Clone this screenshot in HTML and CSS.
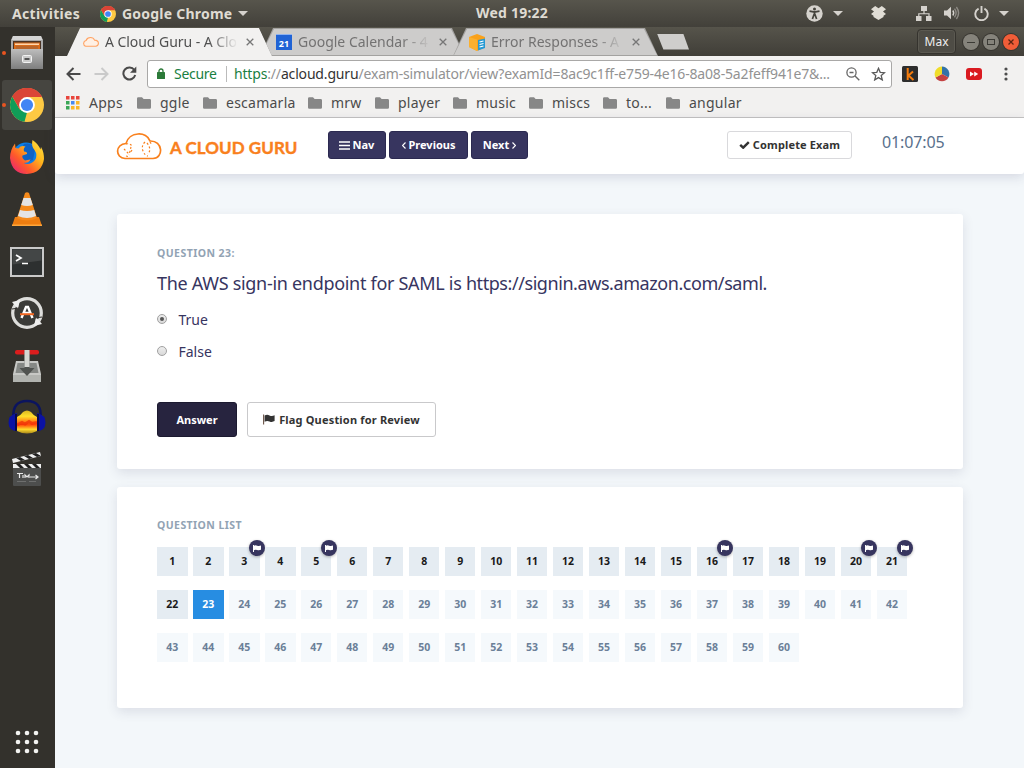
FILE: index.html
```html
<!DOCTYPE html>
<html lang="en">
<head>
<meta charset="utf-8">
<title>A Cloud Guru</title>
<link rel="stylesheet" href="styles.css">
</head>
<body>
<svg width="0" height="0" class="defs">
  <symbol id="chrome" viewBox="0 0 34 34">
    <circle cx="17" cy="17" r="17" fill="#fdc943"/>
    <path d="M17 17L2.3 8.5A17 17 0 0 1 31.7 8.5H17z" fill="#da4437"/>
    <path d="M2.3 8.5L9.6 21.2L17 24.5L14.5 33.8A17 17 0 0 1 2.3 8.5z" fill="#109d58"/>
    <path d="M17 9h15A17 17 0 0 0 2.3 8.5L9.6 21z" fill="#da4437"/>
    <circle cx="17" cy="17" r="7.9" fill="#fff"/><circle cx="17" cy="17" r="6.1" fill="#4285f4"/>
  </symbol>
  <symbol id="folder" viewBox="0 0 14 12"><path d="M0 1.5Q0 .2 1.3 .2H5L6.6 2H12.6Q14 2 14 3.3V10.4Q14 11.7 12.7 11.7H1.3Q0 11.7 0 10.4z" fill="#878787"/></symbol>
  <symbol id="x" viewBox="0 0 8 8"><path d="M.7 .7l6.6 6.6M7.3 .7L.7 7.3" stroke="#777" stroke-width="1.3"/></symbol>
  <symbol id="flag" viewBox="0 0 12 11"><path d="M.6 .5v10" stroke="#6a5348" stroke-width="1.1"/><path d="M1.6 1.6Q4 .2 6.5 1.4T11.6 1.2V7.1Q9 8.6 6.5 7.4T1.6 7.8z" fill="currentColor"/></symbol>
  <symbol id="flagb" viewBox="0 0 8 7"><path d="M0 0h1v7H0z" fill="#fff"/><path d="M.8 .8Q2.5 0 4.2 .7T8 .6V4.8Q6 5.6 4.2 5T.8 5.2z" fill="#fff"/></symbol>
</svg>

<header class="topbar">
  <span class="activities">Activities</span>
  <span class="appmenu"><svg width="16" height="16"><use href="#chrome"/></svg><span class="appname">Google Chrome</span><i class="caret"></i></span>
  <span class="clock">Wed 19:22</span>
  <span class="tray">
    <svg width="17" height="17" viewBox="0 0 17 17"><circle cx="8.5" cy="8.5" r="8.2" fill="#d5d2cd"/><circle cx="8.5" cy="3.9" r="1.5" fill="#45433c"/><path d="M3.5 6.2l4 .7h2l4-.7M8.5 6.8v3M8.2 9l-1.8 5M8.8 9l1.8 5" stroke="#45433c" stroke-width="1.7" fill="none"/></svg>
    <i class="caret c1"></i>
    <svg class="dropbox" width="15" height="14" viewBox="0 0 15 14"><path d="M4.2 0L7.5 2.3 10.8 0 15 3.2 12 5.5 15 8 12.5 9.8V11L7.5 14 2.5 11V9.8L0 8 3 5.5 0 3.2z" fill="#e0ddd5"/></svg>
    <svg class="net" width="16" height="15" viewBox="0 0 16 15"><path d="M5 0h6v5H5zM0 10h5.5v5H0zM10 10h5.5v5H10zM7.4 5h1.2v2.2h5V10h-1.2V8.2h-9V10H2.2V7.2h5.2z" fill="#d5d2cd"/></svg>
    <svg class="vol" width="16" height="14" viewBox="0 0 16 14"><path d="M0 4.5h3L7 .8v12.4L3 9.5H0z" fill="#d5d2cd"/><path d="M8.8 4.5q1.8 2.5 0 5" stroke="#d5d2cd" stroke-width="1.4" fill="none"/><path d="M10.5 2.7q3.2 4.3 0 8.6M12.4 1q4.4 6 0 12" stroke="#8d8a84" stroke-width="1.4" fill="none"/></svg>
    <svg class="power" width="15" height="15" viewBox="0 0 15 15"><path d="M4.6 2.6A6.2 6.2 0 1 0 10.4 2.6" stroke="#d5d2cd" stroke-width="1.9" fill="none"/><path d="M7.5 0v7" stroke="#d5d2cd" stroke-width="1.9"/></svg>
    <i class="caret c2"></i>
  </span>
</header>

<div class="desktop">
  <nav class="dock">
    <a class="slot run"><svg width="34" height="36" viewBox="0 0 34 36"><defs><linearGradient id="gm" x2="0" y2="1"><stop offset="0" stop-color="#bdbdbd"/><stop offset="1" stop-color="#7e7e7e"/></linearGradient></defs><path d="M3 1h28l2 4v29H1V5z" fill="#aaa"/><path d="M3 1h28l1.5 4h-31z" fill="#d5d5d5"/><path d="M3 6h28v9H3z" fill="#4c3424"/><path d="M4 7.5h26v7H4z" fill="#d96b19"/><path d="M5 8.5h24v1.5H5z" fill="#ffd5ac"/><path d="M6 11h22v4H6z" fill="#b9652a"/><path d="M1 14h32v20H1z" fill="url(#gm)"/><rect x="12.5" y="20.500" width="9" height="7" rx="1" fill="#ccc" stroke="#f3f3f3"/><rect x="14.5" y="23" width="5" height="2" fill="#555"/></svg></a>
    <a class="slot run active"><svg width="34" height="34"><use href="#chrome"/></svg></a>
    <a class="slot"><svg width="34" height="36" viewBox="0 0 34 36"><defs><linearGradient id="ff" x1="1" x2="0" y2="1"><stop offset="0" stop-color="#ffe74a"/><stop offset=".35" stop-color="#ffb81c"/><stop offset=".65" stop-color="#ff5a2a"/><stop offset="1" stop-color="#e31587"/></linearGradient></defs><circle cx="16" cy="17" r="13.500" fill="#0b80e8"/><path d="M14 5q9-2 11 6l-2 10-9 3-6-8z" fill="#123f9c" opacity=".45"/><path d="M22.500 1Q21 7 24.500 11Q28 16 25 21Q20 27 13.500 24Q19 24 20.500 20.500L15 21.500Q11.500 19 12.500 16.500L17 15Q17.500 12.500 14 12.500Q13 9.500 15.500 7.500Q11 6 8.500 9.500L5.500 9L5 4.500Q0 11 0 19Q2 35 17 35Q32 34 34 20Q34 13 31 8L30.500 10.500Q28 4.500 22.500 1z" fill="url(#ff)"/></svg></a>
    <a class="slot"><svg width="32" height="36" viewBox="0 0 32 36"><path d="M4 26h24l3 9H1z" fill="#ee7d10"/><path d="M1 33.500h30v1.500H1z" fill="#ffa63a"/><path d="M14 2q2-1.500 4 0l8 25q-10 5-20 0z" fill="#f58a1b"/><path d="M12.500 7h7l2.300 7q-5.800 2-11.600 0zM9 19q7 2 14.200 0l1.800 6q-9 4-18 0z" fill="#e4e4e4"/></svg></a>
    <a class="slot term"><svg width="34" height="30" viewBox="0 0 34 30"><rect x="1" y="1" width="32" height="28" fill="#2d3030" stroke="#c9c9c9" stroke-width="2"/><path d="M2.500 2.500h29v11l-29 4z" fill="#434646"/><path d="M6 8l5 3-5 3" fill="none" stroke="#fff" stroke-width="1.700"/><path d="M12 16.500h6" stroke="#fff" stroke-width="1.500"/></svg></a>
    <a class="slot"><svg width="34" height="34" viewBox="0 0 34 34"><circle cx="17" cy="17" r="14.300" fill="#3b3b38" stroke="#dededc" stroke-width="3.200"/><path d="M2 6l8-2-2 9zM32 28l-8 2 2-9z" fill="#eee"/><path d="M2 13l7-1M25 22l7-1" stroke="#33312d" stroke-width="1.200"/><path d="M11.500 22l4.500-11h2l4.500 11M13 17h8" stroke="#fff" stroke-width="2.400" fill="none"/><path d="M10 18.200h14" stroke="#f16722" stroke-width="2"/></svg></a>
    <a class="slot pump"><svg width="32" height="34" viewBox="0 0 32 34"><path d="M5 12h22l3 13v8H2v-8z" fill="#c7c8c5"/><path d="M6.500 14h19l2 10h-23z" fill="#858885"/><path d="M2 26h28v7H2z" fill="#b1b3af"/><rect x="4" y="1" width="24" height="4.500" rx="2" fill="#db1d1d"/><path d="M13.500 2h5v17h5L16 27l-7.500-8h5z" fill="#505350"/><path d="M13.500 1h5v17h-5z" fill="#d5d6d2"/></svg></a>
    <a class="slot"><svg width="38" height="36" viewBox="0 0 38 36"><defs><linearGradient id="au" x2="0" y2="1"><stop offset="0" stop-color="#d9b422"/><stop offset=".25" stop-color="#ffdf2c"/><stop offset=".5" stop-color="#ff7a10"/><stop offset=".62" stop-color="#ff4a0a"/><stop offset=".82" stop-color="#ffdb2c"/><stop offset="1" stop-color="#a8861d"/></linearGradient></defs><path d="M9 18Q13 16 15 13Q19 10 23 13Q25 16 29 18V32Q19 37 9 32z" fill="url(#au)"/><path d="M9 26l5-2.500 3 1.500 4-2.500 3 2 5-1" stroke="#ee2c08" stroke-width="3" fill="none" opacity=".7"/><path d="M5.500 19Q4 2 19 2T32.500 19" fill="none" stroke="#0b145f" stroke-width="2.600"/><path d="M9 14v18Q1 32 .5 24T9 14zM29 14v18Q37 32 37.500 24T29 14z" fill="#0b12a3"/><path d="M8 15v17M30 15v17" stroke="#07094e" stroke-width="2"/></svg></a>
    <a class="slot"><svg width="32" height="36" viewBox="0 0 32 36"><rect x="2" y="13" width="28" height="22" rx="1" fill="#4d4e4d"/><path d="M2 13h28v4H2zM1 8l28-7 1 4L2 12z" fill="#eee"/><path d="M5 13l4 4h4l-4-4zM13 13l4 4h4l-4-4zM21 13l4 4h4l-4-4zM5 7l5 3 4-1-5-3zM13 5l5 3 4-1-5-3zM21 3l5 3 4-1-5-3z" fill="#202020"/><path d="M6 22.500h6M8.500 23v4M12 24v3M14 27v-3l2 2 2-2v3M19 26h3M22 26h4M24.500 24l2.500 2-2.500 2" stroke="#e8e8e8" stroke-width="1.200" fill="none"/><path d="M6 30.500h9M18 30.500h7" stroke="#777" stroke-width=".8"/></svg></a>
    <svg class="apps9" width="24" height="24" viewBox="0 0 24 24" fill="#f3f3f1"><circle cx="3" cy="3" r="2.300"/><circle cx="12" cy="3" r="2.300"/><circle cx="21" cy="3" r="2.300"/><circle cx="3" cy="12" r="2.300"/><circle cx="12" cy="12" r="2.300"/><circle cx="21" cy="12" r="2.300"/><circle cx="3" cy="21" r="2.300"/><circle cx="12" cy="21" r="2.300"/><circle cx="21" cy="21" r="2.300"/></svg>
  </nav>

  <section class="browser">
    <div class="tabstrip">
      <div class="tab current"><div class="face"><svg class="fav" width="17" height="10" viewBox="0 0 46 26"><path d="M10 24.500a8 8 0 0 1 1-15.500q3-8 12-8 8 0 11 7 10 0 10.500 8.500Q44 24 37 24.500z" fill="#fff0e4" stroke="#ffa363" stroke-width="3"/></svg><span class="title t1">A Cloud Guru - A Clo</span><svg class="close" width="8" height="8"><use href="#x"/></svg></div></div>
      <div class="tab"><div class="face"><span class="cal">21</span><span class="title t2">Google Calendar - 4</span><svg class="close" width="8" height="8"><use href="#x"/></svg></div></div>
      <div class="tab last"><div class="face"><svg class="fav aws" width="17" height="17" viewBox="0 0 17 17"><path d="M0 3l8-3 8 3v10l-8 4-8-4z" fill="#f9a11b"/><path d="M0 3l8 2.500V17l-8-4z" fill="#fbb02f"/><path d="M9 6l7-1.500v9.500L9 16.500z" fill="#2599d3"/><path d="M10.500 8l4-1M10.500 10.500l4-1M10.500 13l4-1" stroke="#fff" stroke-width="1.200"/></svg><span class="title t3">Error Responses - A</span><svg class="close" width="8" height="8"><use href="#x"/></svg></div></div>
      <span class="newtab"></span>
      <span class="user">Max</span>
      <span class="win"><svg width="16" height="16" viewBox="0 0 16 16"><path d="M4 8.500h8" stroke="#3b3a35"/></svg></span>
      <span class="win"><svg width="16" height="16" viewBox="0 0 16 16"><rect x="4.500" y="5.500" width="7" height="5" fill="none" stroke="#3b3a35"/></svg></span>
      <span class="win shut"><svg width="16" height="16" viewBox="0 0 16 16"><path d="M5.500 5.500l5 5M10.500 5.500l-5 5" stroke="#5c2412" stroke-width="1.300"/></svg></span>
    </div>
    <div class="toolbar">
      <svg width="15" height="14" viewBox="0 0 15 14"><path d="M14.500 7H2M7.500 1L1.500 7l6 6" fill="none" stroke="#4a4a4a" stroke-width="2"/></svg>
      <svg class="fwd" width="15" height="14" viewBox="0 0 15 14"><path d="M.5 7H13M7.500 1l6 6-6 6" fill="none" stroke="#cacaca" stroke-width="2"/></svg>
      <svg class="reload" width="15" height="15" viewBox="0 0 15 15"><path d="M12.300 4A6 6 0 1 0 13.200 9" fill="none" stroke="#4a4a4a" stroke-width="2"/><path d="M14.300 .5v6.300H8z" fill="#4a4a4a"/></svg>
      <div class="omnibox">
        <svg class="lock" width="8" height="11" viewBox="0 0 8 11"><path d="M2 5V3a2 2 0 0 1 4 0v2" fill="none" stroke="#2c7a39" stroke-width="1.300"/><rect y="4" width="8" height="7" rx=".6" fill="#2c7a39"/></svg>
        <span class="secure">Secure</span><i class="sep"></i>
        <span class="url"><b>https</b><s>://</s><em>acloud.guru</em><s>/exam-simulator/view?examId=8ac9c1ff-e759-4e16-8a08-5a2feff941e7&amp;...</s></span>
        <svg class="mag" width="14" height="14" viewBox="0 0 14 14"><circle cx="5.500" cy="5.500" r="4.600" fill="none" stroke="#666" stroke-width="1.300"/><path d="M3.500 5.500h4M9 9l4.300 4.300" stroke="#666" stroke-width="1.400"/></svg>
        <svg class="star" width="15" height="14" viewBox="0 0 15 14"><path d="M7.500 1.300l1.700 4 4.400.4-3.400 2.900 1.100 4.300-3.800-2.300-3.800 2.300 1.100-4.300L1.400 5.700l4.400-.4z" fill="none" stroke="#5a5a5a" stroke-width="1.300"/></svg>
      </div>
      <svg class="ext1" width="16" height="16" viewBox="0 0 16 16"><rect width="16" height="16" rx="1.500" fill="#2d2d2d"/><path d="M5.700 2v12M11 5.500L6.500 9.500 11.500 14" fill="none" stroke="#f47b0c" stroke-width="2"/></svg>
      <svg class="ext2" width="16" height="16" viewBox="0 0 16 16"><path d="M8 8V.5A7.500 7.500 0 0 1 14.500 11.500z" fill="#3372a8"/><path d="M8 8l6.500 3.500A7.500 7.500 0 0 1 1.500 11.500z" fill="#c54242"/><path d="M8 8L1.500 11.500A7.500 7.500 0 0 1 8 .5z" fill="#f0dd2a"/></svg>
      <svg class="ext3" width="16" height="12" viewBox="0 0 16 12"><rect width="16" height="12" rx="3" fill="#da1a20"/><path d="M4 3.500l4 2.500-4 2.500zM8.200 3.500l4 2.500-4 2.500z" fill="#fff"/></svg>
      <svg class="dots" width="4" height="14" viewBox="0 0 4 14" fill="#4d4d4d"><circle cx="2" cy="2" r="1.600"/><circle cx="2" cy="7" r="1.600"/><circle cx="2" cy="12" r="1.600"/></svg>
    </div>
    <div class="bookmarks">
      <svg class="grid" width="14" height="14" viewBox="0 0 14 14"><path d="M0 0h3.500v3.500H0zM5 0h3.500v3.500H5zM10 0h3.500v3.500H10z" fill="#e8453c"/><path d="M0 5h3.500v3.500H0zM0 10h3.500v3.500H0z" fill="#3aa757"/><path d="M5 5h3.500v3.500H5z" fill="#4688f1"/><path d="M10 5h3.500v3.500H10zM5 10h3.500v3.500H5zM10 10h3.500v3.500H10z" fill="#f9b529"/></svg>
      <span class="bm b0">Apps</span>
      <svg width="14" height="12"><use href="#folder"/></svg><span class="bm b1">ggle</span>
      <svg width="14" height="12"><use href="#folder"/></svg><span class="bm b2">escamarla</span>
      <svg width="14" height="12"><use href="#folder"/></svg><span class="bm b3">mrw</span>
      <svg width="14" height="12"><use href="#folder"/></svg><span class="bm b4">player</span>
      <svg width="14" height="12"><use href="#folder"/></svg><span class="bm b5">music</span>
      <svg width="14" height="12"><use href="#folder"/></svg><span class="bm b6">miscs</span>
      <svg width="14" height="12"><use href="#folder"/></svg><span class="bm b7">to...</span>
      <svg width="14" height="12"><use href="#folder"/></svg><span class="bm b8">angular</span>
    </div>

    <main class="page">
      <div class="exambar">
        <svg class="logo" width="46" height="27" viewBox="0 0 46 27" fill="none" stroke="#f9801d"><path d="M9 25.500C-1 25-1 11 10 10.500 13-1.500 31-2 34 8c13-.5 14 17 3 17.500z" stroke-width="1.700"/><path d="M10 11q4-1 6 2M15 14l-2 8M8 16l5 5M10 23l4 1M16 17l-2 3M29 9q-4 4-2 9t5 5M31 10q5 6 1 11M34 9l2 3" stroke-width="1.200" stroke-dasharray="2 2"/></svg>
        <span class="brand">A CLOUD GURU</span>
        <div class="navbtns">
          <button class="btn navy nav"><svg width="11" height="9" viewBox="0 0 11 9"><path d="M0 1h11M0 4.500h11M0 8h11" stroke="#fff" stroke-width="1.700"/></svg><span>Nav</span></button>
          <button class="btn navy prev"><svg width="4" height="7" viewBox="0 0 4 7"><path d="M3.500 .5l-3 3 3 3" fill="none" stroke="#fff" stroke-width="1.200"/></svg><span>Previous</span></button>
          <button class="btn navy next"><span>Next</span><svg width="4" height="7" viewBox="0 0 4 7"><path d="M.5 .5l3 3-3 3" fill="none" stroke="#fff" stroke-width="1.200"/></svg></button>
        </div>
        <button class="btn line complete"><svg width="11" height="8" viewBox="0 0 11 8"><path d="M1.200 3.800l3 2.900L9.800 1.100" fill="none" stroke="#333" stroke-width="2.400"/></svg><span>Complete Exam</span></button>
        <span class="timer">01:07:05</span>
      </div>

      <section class="card question">
        <h2 class="label l1">QUESTION 23:</h2>
        <p class="prompt">The AWS sign-in endpoint for SAML is <span class="link">https://signin.aws.amazon.com/saml.</span></p>
        <label class="opt"><i class="radio on"></i><span class="o1">True</span></label>
        <label class="opt"><i class="radio"></i><span class="o2">False</span></label>
        <div class="actions">
          <button class="btn answer"><span>Answer</span></button>
          <button class="btn line review"><svg width="12" height="11"><use href="#flag"/></svg><span>Flag Question for Review</span></button>
        </div>
      </section>

      <section class="card list">
        <h2 class="label l2">QUESTION LIST</h2>
        <div class="cells">
          <a class="done">1</a><a class="done">2</a><a class="done">3<i class="mark"><svg width="8" height="7"><use href="#flagb"/></svg></i></a><a class="done">4</a><a class="done">5<i class="mark"><svg width="8" height="7"><use href="#flagb"/></svg></i></a><a class="done">6</a><a class="done">7</a><a class="done">8</a><a class="done">9</a><a class="done">10</a><a class="done">11</a><a class="done">12</a><a class="done">13</a><a class="done">14</a><a class="done">15</a><a class="done">16<i class="mark"><svg width="8" height="7"><use href="#flagb"/></svg></i></a><a class="done">17</a><a class="done">18</a><a class="done">19</a><a class="done">20<i class="mark"><svg width="8" height="7"><use href="#flagb"/></svg></i></a><a class="done">21<i class="mark"><svg width="8" height="7"><use href="#flagb"/></svg></i></a>
          <a class="done">22</a><a class="now">23</a><a>24</a><a>25</a><a>26</a><a>27</a><a>28</a><a>29</a><a>30</a><a>31</a><a>32</a><a>33</a><a>34</a><a>35</a><a>36</a><a>37</a><a>38</a><a>39</a><a>40</a><a>41</a><a>42</a>
          <a>43</a><a>44</a><a>45</a><a>46</a><a>47</a><a>48</a><a>49</a><a>50</a><a>51</a><a>52</a><a>53</a><a>54</a><a>55</a><a>56</a><a>57</a><a>58</a><a>59</a><a>60</a>
        </div>
      </section>
    </main>
  </section>
</div>
</body>
</html>
```

FILE: styles.css
```css
* { box-sizing: border-box; }
body { margin: 0; width: 1024px; height: 768px; overflow: hidden; display: flex; flex-direction: column; font-family: "Noto Sans", "Open Sans", sans-serif; font-size: 14px; background: #33312c; }
svg { display: block; flex: none; }
span { white-space: nowrap; }
.defs { position: absolute; }

.topbar { height: 27px; flex: none; display: flex; align-items: center; background: linear-gradient(#57554c, #42403a); color: #dfdbd2; font-weight: 700; position: relative; padding-left: 12px; }
.activities { width: 88px; letter-spacing: .3px; }
.appmenu { display: flex; align-items: center; }
.appname { margin-left: 6px; width: 116px; letter-spacing: .22px; }
.caret { border: 5px solid transparent; border-top-color: #d5d2cd; border-bottom: 0; }
.clock { margin: -2px 0 0 228px; width: 100px; letter-spacing: .22px; }
.tray { display: flex; align-items: center; margin: -1px 0 0 auto; padding-right: 15px; }
.c1 { margin-left: 10px; }
.dropbox { margin-left: 28px; }
.net { margin-left: 30px; }
.vol { margin-left: 12px; }
.power { margin-left: 14px; }
.c2 { margin-left: 10px; }

.desktop { flex: 1; display: flex; min-height: 0; }
.dock { width: 55px; flex: none; display: flex; flex-direction: column; align-items: center; background: #33312c; padding: 1px 1px 0 0; }
.slot { width: 50px; height: 50px; margin-bottom: 2px; border-radius: 3px; display: flex; align-items: center; justify-content: center; position: relative; }
.slot.active { background: #464540; }
.term, .pump { padding-top: 2px; }
.run::before { content: ""; position: absolute; left: 0; top: 23px; width: 4px; height: 4px; border-radius: 50%; background: #e95420; }
.apps9 { margin-top: auto; margin-bottom: 14px; }

.browser { flex: 1; min-width: 0; display: flex; flex-direction: column; background: #f2f1f0; }
.tabstrip { height: 29px; flex: none; display: flex; align-items: center; background: linear-gradient(#56544b, #403e38); padding: 0 5px 0 12px; }
.tab { width: 205px; height: 28px; margin: 1px -12px 0 0; position: relative; z-index: 1; background: #a3a2a0; clip-path: polygon(0 100%, 13px 0, 192px 0, 100% 100%); }
.face { height: 100%; display: flex; align-items: center; padding-left: 15px; background: #cdcccb; color: #737272; clip-path: polygon(1px 27px, 14px 1px, 191px 1px, 204px 27px); }
.current { z-index: 2; }
.current .face { background: #f2f1f0; color: #505050; clip-path: polygon(0 100%, 13px 0, 192px 0, 100% 100%); }
.last { margin-right: -1px; }
.title { overflow: hidden; margin: -2px 0 0 6px; width: 133px; -webkit-mask-image: linear-gradient(90deg, #000 78%, transparent); mask-image: linear-gradient(90deg, #000 78%, transparent); font-size: 14px; }
.t1 { letter-spacing: -.05px; }
.t2 { margin-left: 6px; }
.close { margin-left: 8px; }
.cal { width: 16px; height: 16px; margin-left: 1px; background: #2063d5; color: #fff; font: 700 9px/17px "Open Sans", sans-serif; text-align: center; border-top: 1px solid #8eb2ef; }
.aws { margin-left: 1px; }
.aws + .title { margin-left: 5px; }
.newtab { width: 32px; height: 16px; background: #cfcecc; clip-path: polygon(0 0, 82% 0, 100% 100%, 20% 100%); }
.user { margin-left: auto; width: 39px; height: 25px; border: 1px solid #35332e; border-radius: 4px; background: #4e4c45; box-shadow: inset 0 0 0 1px #5b5951; color: #eee; font-size: 12px; line-height: 24px; text-align: center; margin-right: 3px; }
.win { width: 16px; height: 16px; border-radius: 50%; margin-left: 4px; background: #85837b; box-shadow: 0 0 0 1px #36342f; }
.win.shut { background: #f15d38; }

.toolbar { height: 35px; flex: none; display: flex; align-items: center; padding-left: 11px; }
.fwd { margin-left: 13px; }
.reload { margin-left: 13px; }
.omnibox { margin-left: 10px; width: 745px; height: 28px; background: #fff; border: 1px solid #a9a8a7; border-radius: 3px; display: flex; align-items: center; padding-left: 9px; }
.secure { color: #1a8042; margin-left: 9px; width: 52px; letter-spacing: -.3px; }
.sep { width: 1px; height: 16px; background: #bbb; }
.url { margin-left: 7px; width: 611px; letter-spacing: -.17px; }
.url b, .url s, .url em { font-weight: 400; font-style: normal; text-decoration: none; }
.url b { color: #1a8042; }
.url em { color: #333; }
.url s { color: #929292; }
.mag { margin-left: 1px; }
.star { margin-left: 11px; }
.ext1 { margin-left: 10px; }
.ext2 { margin-left: 16px; }
.ext3 { margin-left: 16px; }
.dots { margin-left: 22px; }

.bookmarks { height: 27px; flex: none; display: flex; align-items: center; padding: 0 0 3px 11px; border-bottom: 1px solid #c4c3c2; color: #4b4b4b; }
.bm { margin-left: 9px; letter-spacing: .25px; }
.b0 { width: 48px; } .b1 { width: 43px; } .b2 { width: 82px; } .b3 { width: 44px; } .b4 { width: 55px; } .b5 { width: 53px; } .b6 { width: 51px; } .b7 { width: 40px; }

.page { flex: 1; min-height: 0; background: #f3f7fa; color: #37355f; }
.exambar { height: 56px; background: #fff; box-shadow: 0 3px 12px rgba(50, 50, 93, .16); display: flex; align-items: center; padding-left: 61px; border-radius: 0 0 3px 3px; }
.brand { margin: 4px 0 0 8px; width: 158px; color: #f9801d; font: 700 17px/20px Lato, sans-serif; letter-spacing: .05px; -webkit-text-stroke: .4px #f9801d; }
.btn { font: 700 11px/16px "Noto Sans", sans-serif; height: 28px; border-radius: 3px; padding: 0; display: flex; align-items: center; justify-content: center; gap: 3px; border: 1px solid #2b2950; }
.navbtns { display: flex; gap: 3px; margin-top: -2px; }
.navy { background: #37355f; color: #fff; }
.nav { width: 58px; padding-right: 1px; } .prev { width: 79px; } .next { width: 57px; }
.line { background: #fff; color: #333; border-color: #d9d9dc; }
.complete { width: 125px; margin: -2px 0 0 199px; letter-spacing: .14px; }
.timer { margin: -8px 0 0 30px; font-size: 16px; letter-spacing: -.12px; color: #58708c; }

.card { width: 846px; margin: 40px 0 0 62px; padding: 31px 40px 0; background: #fff; border-radius: 3px; box-shadow: 0 4px 12px rgba(50, 50, 93, .12); }
.question { height: 255px; }
.list { height: 221px; margin-top: 18px; padding-top: 30px; }
.label { margin: 0; color: #92a3b4; font-size: 10.500px; line-height: 16px; font-weight: 700; }
.l1 { letter-spacing: .44px; }
.l2 { letter-spacing: .42px; }
.prompt { margin: 10px 0 0; font-size: 18px; line-height: 25px; letter-spacing: -.3px; white-space: nowrap; }
.link { letter-spacing: -.43px; }
.opt { display: flex; align-items: center; height: 32px; font-size: 14px; }
.opt span { margin-top: -2px; }
.prompt + .opt { margin-top: 8px; }
.radio { width: 10px; height: 10px; border-radius: 50%; border: 1px solid #a1a1a1; background: linear-gradient(#ededed, #d9d9d9); margin-right: 11.500px; display: flex; align-items: center; justify-content: center; margin-top: -2px; }
.radio.on::before { content: ""; width: 4px; height: 4px; border-radius: 50%; background: #555; }
.actions { display: flex; gap: 10px; margin-top: 34px; }
.actions .btn { height: 35px; }
.answer { width: 80px; background: #27243f; color: #fff; border-color: #1c1a30; }
.review { width: 189px; border-color: #c9c9cb; letter-spacing: .18px; gap: 4px; }
.cells { display: grid; grid-template-columns: repeat(21, 30.550px); column-gap: 5.440px; row-gap: 14px; margin-top: 14px; }
.cells a { height: 29px; background: #f5f9fc; color: #6b8098; font-size: 10.500px; font-weight: 700; line-height: 28px; text-align: center; position: relative; }
.cells .done { background: #e5ecf2; color: #1a1a1a; }
.cells .now { background: #278de2; color: #fff; }
.mark { position: absolute; right: -5.500px; top: -7px; width: 16px; height: 16px; border-radius: 50%; background: #37355f; display: flex; align-items: center; justify-content: center; box-shadow: 0 1px 3px rgba(0, 0, 0, .3); }
```
